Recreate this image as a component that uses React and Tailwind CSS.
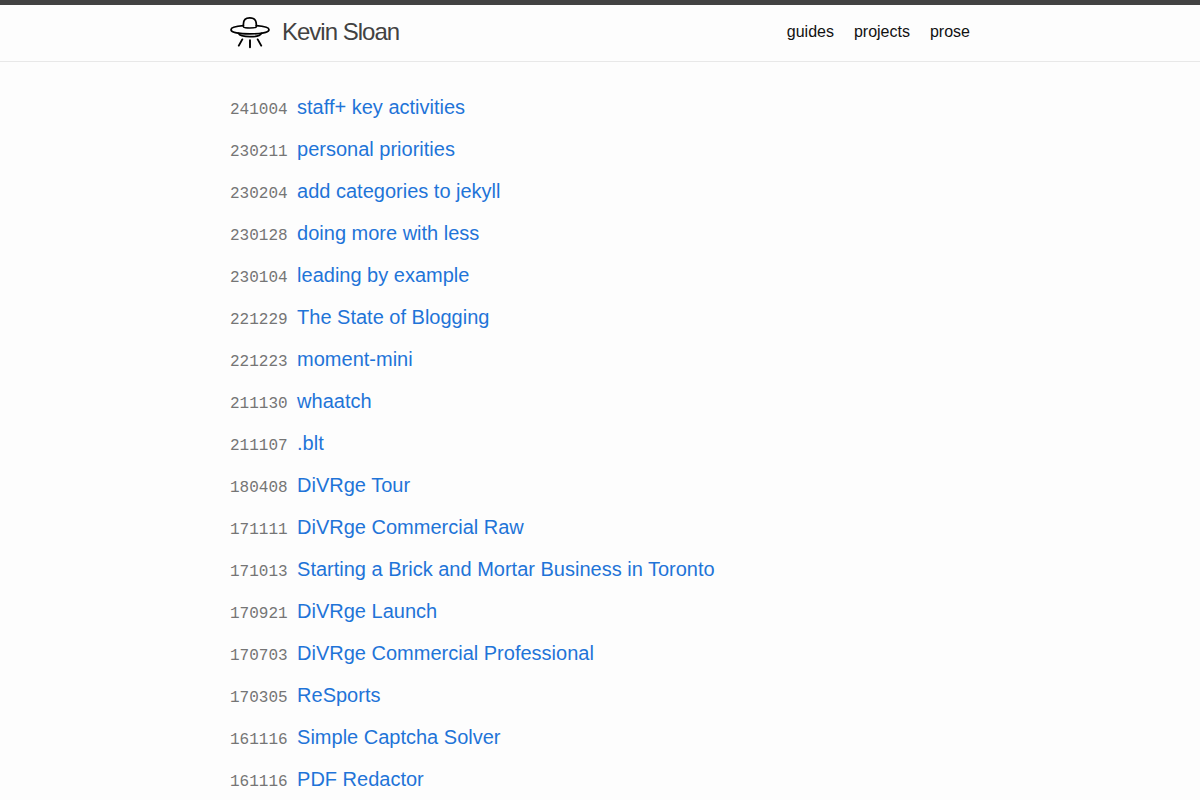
const links = ["guides", "projects", "prose"];

const posts = [
  { date: "241004", title: "staff+ key activities" },
  { date: "230211", title: "personal priorities" },
  { date: "230204", title: "add categories to jekyll" },
  { date: "230128", title: "doing more with less" },
  { date: "230104", title: "leading by example" },
  { date: "221229", title: "The State of Blogging" },
  { date: "221223", title: "moment-mini" },
  { date: "211130", title: "whaatch" },
  { date: "211107", title: ".blt" },
  { date: "180408", title: "DiVRge Tour" },
  { date: "171111", title: "DiVRge Commercial Raw" },
  { date: "171013", title: "Starting a Brick and Mortar Business in Toronto" },
  { date: "170921", title: "DiVRge Launch" },
  { date: "170703", title: "DiVRge Commercial Professional" },
  { date: "170305", title: "ReSports" },
  { date: "161116", title: "Simple Captcha Solver" },
  { date: "161116", title: "PDF Redactor" },
];

const Logo = () => (
  <svg
    className="w-10 h-10"
    viewBox="0 0 40 40"
    fill="none"
    stroke="#000"
    strokeWidth="1.7"
    strokeLinecap="round"
    strokeLinejoin="round"
    aria-hidden="true"
  >
    <path d="M13.4 14.8V12.2C13.4 8 16 5.9 19.7 5.9S26.3 8 26.3 12.2V14.8C26.3 16.4 13.4 16.4 13.4 14.8Z" />
    <path d="M13.4 13.7C6 14.2 1 15.6 1 17.7C1 20.3 9.5 21.9 20 21.9S39 20.3 39 17.7C39 15.6 34 14.2 26.3 13.7" />
    <path d="M8.6 21.4C9.6 23.8 14.5 24.7 20 24.7S30.400 23.8 31.4 21.4" />
    <path d="M12.3 27.4L8.8 33.6M20 28.2V35.2M27.7 27.4L31.2 33.6" strokeWidth="1.9" />
  </svg>
);

const Header = () => (
  <header className="border-t-5 border-b border-t-[#424242] border-b-[#e8e8e8]">
    <div className="max-w-[800px] mx-auto px-[30px] pb-0.5 h-14 flex items-center justify-between">
      <a href="#home" className="flex items-center gap-3 text-2xl tracking-[-1px] text-[#424242]">
        <Logo />
        Kevin Sloan
      </a>
      <nav className="flex gap-5">
        {links.map((link) => (
          <a key={link} href={`#${link}`} className="text-base text-[#111]">
            {link}
          </a>
        ))}
      </nav>
    </div>
  </header>
);

const App = () => {
  return (
    <div className="min-h-screen bg-[#fdfdfd] font-['Liberation_Sans',Arial,sans-serif]">
      <Header />
      <main className="max-w-[800px] mx-auto px-[30px] pt-[30px]">
        <ul className="space-y-3">
          {posts.map((post) => (
            <li key={post.title} className="leading-6">
              <time className="mr-[5px] font-['Liberation_Mono',monospace] text-base leading-6 text-[#757575]">
                {post.date}
              </time>{" "}
              <a href="#post" className="text-xl leading-[30px] text-[#1f74d8]">
                {post.title}
              </a>
            </li>
          ))}
        </ul>
      </main>
    </div>
  );
};

export default App;
